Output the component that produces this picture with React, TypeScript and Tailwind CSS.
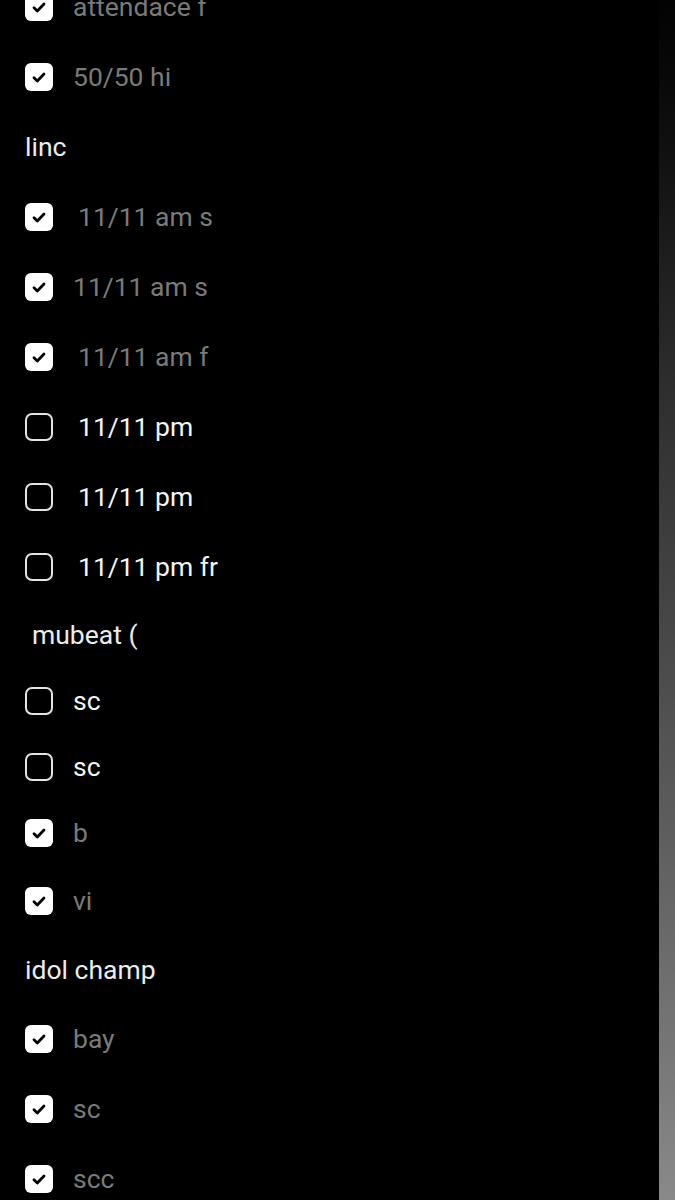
import React from 'react';

type Row =
  | { kind: 'task'; label: string; done: boolean; indent?: boolean; h: string }
  | { kind: 'group'; label: string; indent?: boolean; h: string };

const rows: Row[] = [
  { kind: 'task', label: 'attendace f', done: true, h: 'h-[70px]' },
  { kind: 'task', label: '50/50 hi', done: true, h: 'h-[70px]' },
  { kind: 'group', label: 'linc', h: 'h-[70px]' },
  { kind: 'task', label: '11/11 am s', done: true, indent: true, h: 'h-[70px]' },
  { kind: 'task', label: '11/11 am s', done: true, h: 'h-[70px]' },
  { kind: 'task', label: '11/11 am f', done: true, indent: true, h: 'h-[70px]' },
  { kind: 'task', label: '11/11 pm', done: false, indent: true, h: 'h-[70px]' },
  { kind: 'task', label: '11/11 pm', done: false, indent: true, h: 'h-[70px]' },
  { kind: 'task', label: '11/11 pm fr', done: false, indent: true, h: 'h-[70px]' },
  { kind: 'group', label: 'mubeat (', indent: true, h: 'h-[66px]' },
  { kind: 'task', label: 'sc', done: false, h: 'h-[66px]' },
  { kind: 'task', label: 'sc', done: false, h: 'h-[66px]' },
  { kind: 'task', label: 'b', done: true, h: 'h-[66px]' },
  { kind: 'task', label: 'vi', done: true, h: 'h-[70px]' },
  { kind: 'group', label: 'idol champ', h: 'h-[68px]' },
  { kind: 'task', label: 'bay', done: true, h: 'h-[70px]' },
  { kind: 'task', label: 'sc', done: true, h: 'h-[70px]' },
  { kind: 'task', label: 'scc', done: true, h: 'h-[70px]' },
];

const CheckBox = ({ checked }: { checked: boolean }) =>
  checked ? (
    <div className="w-[28px] h-[28px] rounded-[6px] bg-white flex items-center justify-center shrink-0">
      <svg width="14" height="11" viewBox="0 0 14 11" fill="none">
        <path d="M2 5.8 L5.3 9 L12 2" stroke="#000" strokeWidth="2.8" strokeLinecap="round" strokeLinejoin="round" />
      </svg>
    </div>
  ) : (
    <div className="w-[28px] h-[28px] rounded-[7px] border-2 border-[#e4e4e4] shrink-0" />
  );

const App = () => {
  return (
    <div className="w-[675px] h-[1200px] overflow-hidden bg-black flex" style={{ fontFamily: 'Roboto, "Noto Sans", sans-serif' }}>
      {/* checklist */}
      <div className="flex-1 mt-[-28px]">
        {rows.map((row, i) =>
          row.kind === 'group' ? (
            <div key={i} className={`${row.h} flex items-center ${row.indent ? 'pl-[32px]' : 'pl-[25px]'}`}>
              <span className="text-[26.5px] text-[#ececec] leading-none">{row.label}</span>
            </div>
          ) : (
            <div key={i} className={`${row.h} flex items-center pl-[25px]`}>
              <CheckBox checked={row.done} />
              <span
                className={`text-[26.5px] leading-none ${row.indent ? 'ml-[25px]' : 'ml-[20px]'} ${
                  row.done ? 'text-[#7a7a7a]' : 'text-[#f4f4f4]'
                }`}
              >
                {row.label}
              </span>
            </div>
          )
        )}
      </div>

      {/* scroll rail */}
      <div className="w-[16px] h-full bg-linear-to-b from-[#030303] via-[#2f2f2f] via-33% to-[#898989]" />
    </div>
  );
};

export default App;
